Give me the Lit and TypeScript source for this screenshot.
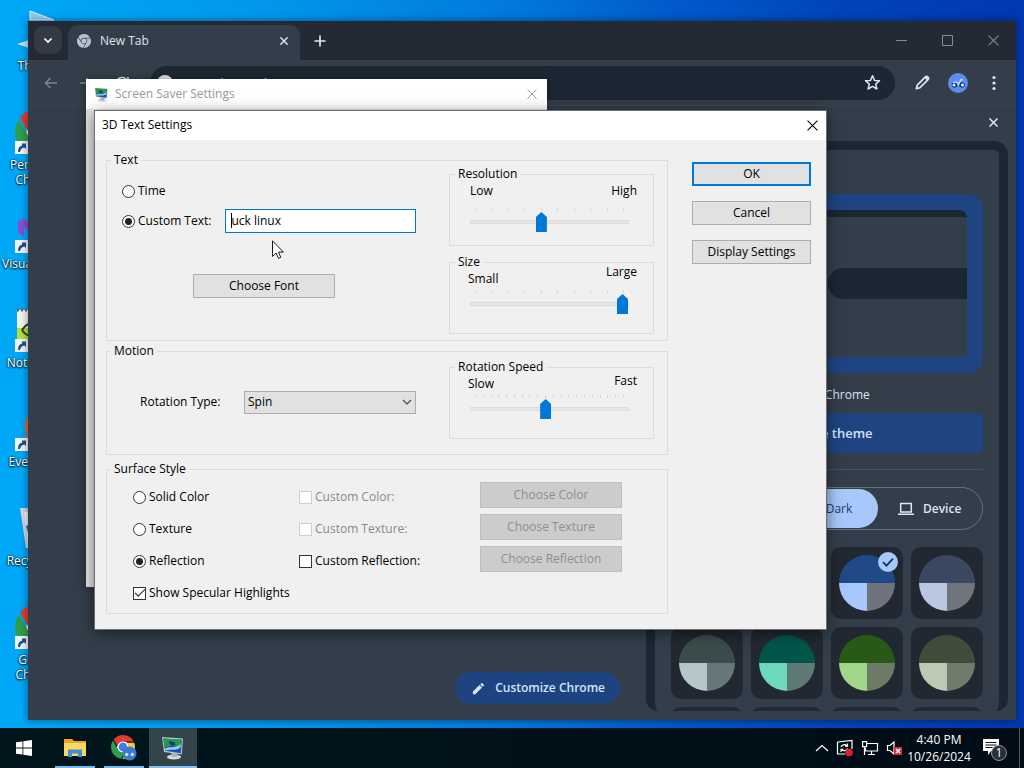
import { LitElement, html, css, svg, nothing } from "lit";
import { customElement, property } from "lit/decorators.js";
import { classMap } from "lit/directives/class-map.js";

const base = css`
  * { box-sizing: border-box; }
  :host { font-family: "Open Sans", "Noto Sans", sans-serif; font-size: 12px; line-height: 16px; }
  button, input, select { font: inherit; margin: 0; }
  svg { display: block; flex: none; }
`;

const chromeParts = [
  "M12 0C8.21 0 4.831 1.757 2.632 4.501l3.953 6.848A5.454 5.454 0 0 1 12 6.545h10.691A12 12 0 0 0 12 0z",
  "M1.931 5.47A11.943 11.943 0 0 0 0 12c0 6.012 4.42 10.991 10.189 11.864l3.953-6.847a5.45 5.45 0 0 1-6.865-2.29z",
  "M15.273 7.636a5.446 5.446 0 0 1 1.45 7.09l-5.344 9.258c.206.01.413.016.621.016 6.627 0 12-5.373 12-12 0-1.54-.29-3.011-.818-4.364z",
];

const chromeLogo = (size: number, mono = "") => html`
  <svg width=${size} height=${size} viewBox="0 0 24 24" aria-hidden="true">
    ${mono ? nothing : svg`<circle cx="12" cy="12" r="6" fill="#fff"/>`}
    <path d=${chromeParts[0]} fill=${mono || "#e33b2e"} />
    <path d=${chromeParts[1]} fill=${mono || "#2f9e4c"} />
    <path d=${chromeParts[2]} fill=${mono || "#f8c93a"} />
    <circle cx="12" cy="12" r="4.4" fill=${mono || "#3f7de8"} />
  </svg>`;

const monitorIcon = (size: number) => html`
  <svg width=${size} height=${size} viewBox="0 0 24 24" aria-hidden="true">
    <ellipse cx="13" cy="21" rx="7" ry="2.6" fill="#d5dade"/>
    <path d="M10 16l7 1-1 4h-5z" fill="#aab3bb"/>
    <path d="M1 1l21 1.5-1.200 16L3 16z" fill="#b4c6d2"/>
    <path d="M2.400 2.400l18.400 1.300-1 13.600L4.200 14.800z" fill="#1c4fb0"/>
    <path d="M2.400 2.400l18.400 1.300-.3 4.500c-5 5-10-1-17.200 3.600z" fill="#249a44"/>
    <path d="M4 12.500c5-3 9 1 15.800-4.500l-.3 3.500c-5 4-10 1-15.300 3.200z" fill="#8fccf0"/>
    <path d="M8 5.500c3-1 6 .5 6.500 3-2 1.800-6 1.800-6.500-3z" fill="#153b80"/>
  </svg>`;

const pencil = (size: number, filled = false) => html`
  <svg width=${size} height=${size} viewBox="0 0 16 16" aria-hidden="true">
    ${filled
      ? svg`<path d="M2 11.300V14h2.700l7-7L9 4.300zM13.700 5a.8.8 0 0 0 0-1.100l-1.600-1.600a.8.8 0 0 0-1.100 0L9.800 3.500l2.700 2.700z" fill="currentColor"/>`
      : svg`<path d="M2.200 13.800l.9-3.400 7.600-7.600c.7-.7 1.500-.7 2.100-.1l.5.5c.6.6.6 1.400-.1 2.100l-7.600 7.600z" fill="none" stroke="currentColor" stroke-width="1.600" stroke-linejoin="round"/><path d="M9.600 3.400l1.700-1.200 2.500 2.500-1.200 1.700z" fill="currentColor"/>`}
  </svg>`;

const cross = (size: number, width = 1.5) => html`
  <svg width=${size} height=${size} viewBox="0 0 10 10" aria-hidden="true">
    <path d="M.5.5l9 9M9.500.5l-9 9" stroke="currentColor" stroke-width=${width} fill="none"/>
  </svg>`;

@customElement("slider-group")
class SliderGroup extends LitElement {
  @property() name = "";
  @property() low = "";
  @property() high = "";
  @property({ type: Number }) max = 9;
  @property({ type: Number }) value = 0;
  @property() variant = "even";

  static styles = [base, css`
    :host { display: block; }
    fieldset { border: 1px solid #dcdcdc; margin: 0; padding: 0 24px 13px 20px; min-width: 0; }
    legend { line-height: 12px; padding: 0 3px; margin-left: -15px; }
    .ends { display: flex; justify-content: space-between; line-height: 12px; margin: -2px -8px 0 0; padding-top: 7px; height: 19px; }
    .fast .ends, .large .ends { margin-left: -2px; margin-right: -8px; }
    .fast .ends { padding-top: 4px; }
    .fast .low { padding-top: 3px; }
    .large .ends { padding-top: 0; }
    .large .low { padding-top: 7px; }
    .ticks { display: flex; justify-content: space-between; height: 4px; padding: 0 5px; margin-top: 5px; }
    .even .ticks { margin-top: 11px; }
    fieldset.large, fieldset.fast { padding-bottom: 19px; }
    .ticks i { width: 1px; height: 3px; background: #d6d6d6; }
    input { appearance: none; display: block; width: 100%; height: 20px; background: none; outline: none; }
    input::-webkit-slider-runnable-track { height: 4px; background: #e6e6e6; border: 1px solid #dcdcdc; }
    input::-webkit-slider-thumb {
      appearance: none; width: 11px; height: 20px; margin-top: -9px; background: #0078d7;
      clip-path: polygon(50% 0, 100% 25%, 100% 100%, 0 100%, 0 25%);
    }
  `];

  render() {
    return html`
      <fieldset class=${this.variant}>
        <legend>${this.name}</legend>
        <div class="ends"><span class="low">${this.low}</span><span>${this.high}</span></div>
        <div class="ticks">${Array.from({ length: this.max + 1 }, () => html`<i></i>`)}</div>
        <input type="range" aria-label=${this.name} min="0" max=${this.max} .value=${String(this.value)} />
      </fieldset>`;
  }
}

@customElement("text-settings-dialog")
class TextSettingsDialog extends LitElement {
  static styles = [base, css`
    :host { display: block; background: #f0f0f0; color: #000; border: 1px solid #6b6f75; box-shadow: 0 3px 14px rgba(0, 0, 0, .5); }
    header { display: flex; align-items: center; justify-content: space-between; height: 29px; padding: 0 8px 1px 7px; background: #fff; }
    header button { border: 0; background: none; padding: 0; color: #000; }
    .body { display: grid; grid-template-columns: 1fr 119px; gap: 24px; padding: 14px 15px 15px 11px; }
    .groups { display: flex; flex-direction: column; gap: 4px; }
    .group { border: 1px solid #dcdcdc; margin: 0; padding: 0 13px 0 15px; min-width: 0; }
    .group > legend { line-height: 12px; padding: 0 3px; margin-left: -11px; }
    .cols { display: grid; grid-template-columns: 1fr 205px; gap: 33px; }
    .sliders { display: flex; flex-direction: column; gap: 10px; padding: 2px 0 6px; }
    .motion .cols { padding: 4px 0 15px; }
    .left { display: flex; flex-direction: column; }
    .line { display: flex; align-items: center; height: 30px; }
    .left .line:first-child { margin-top: 10px; }
    label { display: flex; align-items: center; gap: 3px; white-space: nowrap; }
    .field { position: relative; flex: 1; margin-left: 14px; }
    .field input { display: block; width: 100%; height: 24px; border: 1px solid #0078d7; background: #fff; padding: 0 5px 2px; outline: none; color: #000; }
    .caret { position: absolute; left: 6px; top: 4px; width: 1px; height: 15px; background: #000; }
    .btn { height: 24px; border: 1px solid #adadad; background: #e1e1e1; padding: 0; color: #000; }
    .btn.default { border: 2px solid #0078d7; }
    .btn:disabled { height: 26px; background: #ccc; border-color: #bfbfbf; color: #8e8e8e; }
    .font { width: 142px; margin: 38px 0 0 71px; }
    .motion .left { flex-direction: row; align-items: center; justify-content: space-between; padding: 4px 0 0 18px; }
    .pick { position: relative; width: 172px; }
    .pick select { appearance: none; display: block; width: 100%; height: 23px; border: 1px solid #adadad; background: #e1e1e1; padding: 0 3px; border-radius: 0; color: #000; }
    .pick svg { position: absolute; right: 4px; top: 8px; }
    .surface { margin-top: 4px; }
    .surface .grid { display: grid; grid-template-columns: 166px 181px 142px; grid-auto-rows: 32px; padding: 6px 0 4px 11px; align-items: center; }
    .surface .btn { align-self: start; margin-top: 1px; }
    .wide { grid-column: 1 / -1; }
    input[type="radio"], input[type="checkbox"] { appearance: none; width: 13px; height: 13px; border: 1px solid #333; background: #fff; display: grid; place-content: center; flex: none; }
    input[type="radio"] { border-radius: 50%; }
    input[type="radio"]:checked::before { content: ""; width: 7px; height: 7px; border-radius: 50%; background: #222; }
    input[type="checkbox"]:checked::before { content: ""; width: 9px; height: 4px; border: solid #222; border-width: 0 0 1px 1px; transform: rotate(-45deg); margin-bottom: 3px; }
    input[type="checkbox"]:disabled { border-color: #ccc; }
    .off { color: #8a8a8a; }
    .actions { display: flex; flex-direction: column; gap: 15px; padding-top: 8px; }
  `];

  private radio(name: string, text: string, checked = false) {
    return html`<label><input type="radio" name=${name} .checked=${checked} />${text}</label>`;
  }

  private check(text: string, checked = false, disabled = false) {
    return html`<label class=${classMap({ off: disabled })}><input type="checkbox" .checked=${checked} ?disabled=${disabled} />${text}</label>`;
  }

  render() {
    return html`
      <header><span>3D Text Settings</span><button aria-label="Close">${cross(11, 1)}</button></header>
      <div class="body">
        <div class="groups">
          <fieldset class="group">
            <legend>Text</legend>
            <div class="cols">
              <div class="left">
                <div class="line">${this.radio("source", "Time")}</div>
                <div class="line">
                  ${this.radio("source", "Custom Text:", true)}
                  <div class="field"><input type="text" aria-label="Custom Text" .value=${"uck linux"} /><i class="caret"></i></div>
                </div>
                <button class="btn font">Choose Font</button>
              </div>
              <div class="sliders">
                <slider-group name="Resolution" low="Low" high="High" max="9" value="4" variant="even"></slider-group>
                <slider-group name="Size" low="Small" high="Large" max="9" value="9" variant="large"></slider-group>
              </div>
            </div>
          </fieldset>
          <fieldset class="group motion">
            <legend>Motion</legend>
            <div class="cols">
              <div class="left">
                <label for="rotation">Rotation Type:</label>
                <div class="pick">
                  <select id="rotation"><option>Spin</option></select>
                  <svg width="10" height="7" viewBox="0 0 10 7" aria-hidden="true"><path d="M1 1l4 4 4-4" fill="none" stroke="#444" stroke-width="1.100"/></svg>
                </div>
              </div>
              <slider-group name="Rotation Speed" low="Slow" high="Fast" max="19" value="9" variant="fast"></slider-group>
            </div>
          </fieldset>
          <fieldset class="group surface">
            <legend>Surface Style</legend>
            <div class="grid">
              ${this.radio("surface", "Solid Color")}
              ${this.check("Custom Color:", false, true)}
              <button class="btn" disabled>Choose Color</button>
              ${this.radio("surface", "Texture")}
              ${this.check("Custom Texture:", false, true)}
              <button class="btn" disabled>Choose Texture</button>
              ${this.radio("surface", "Reflection", true)}
              ${this.check("Custom Reflection:")}
              <button class="btn" disabled>Choose Reflection</button>
              <div class="wide">${this.check("Show Specular Highlights", true)}</div>
            </div>
          </fieldset>
        </div>
        <div class="actions">
          <button class="btn default">OK</button>
          <button class="btn">Cancel</button>
          <button class="btn">Display Settings</button>
        </div>
      </div>`;
  }
}

@customElement("browser-window")
class BrowserWindow extends LitElement {
  static styles = [base, css`
    :host { display: flex; flex-direction: column; background: #333e4a; color: #dfe5ee; box-shadow: 0 0 8px rgba(0, 0, 0, .45); overflow: hidden; }
    button { border: 0; background: none; padding: 0; color: inherit; display: grid; place-content: center; }
    .tabs { display: flex; background: #232a35; height: 39px; padding-left: 6px; flex: none; }
    .list { width: 28px; height: 28px; margin-top: 5px; border-radius: 9px; background: #343a43; }
    .tab { display: flex; align-items: center; gap: 9px; width: 232px; margin: 4px 0 0 6px; padding: 0 12px 4px 9px; background: #333e4a; border-radius: 10px 10px 0 0; }
    .tab span { flex: 1; }
    .plus { width: 40px; }
    .controls { display: flex; margin-left: auto; color: #858b93; }
    .controls button { width: 46px; }
    .toolbar { display: flex; align-items: center; height: 46px; padding: 0 4px; flex: none; border-bottom: 1px solid #394550; }
    .toolbar > button { width: 36px; height: 36px; }
    .dim { color: #7b8590; }
    .omni { flex: 1; display: flex; align-items: center; gap: 14px; height: 34px; border-radius: 17px; background: #1d2733; margin: 0 9px 0 10px; padding: 0 14px 0 7px; }
    .omni input { flex: 1; min-width: 0; border: 0; background: none; padding: 0; color: inherit; font-size: 13px; }
    .omni input::placeholder { color: #dfe5ee; }
    .badge { width: 16px; height: 16px; border-radius: 50%; background: #dfe5ee; }
    .page { flex: 1; display: flex; min-height: 0; }
    .ntp { flex: 1; display: flex; align-items: flex-end; justify-content: flex-end; padding: 0 26px 16px 0; }
    .custom { display: flex; align-items: center; gap: 9px; height: 32px; padding: 0 15px 0 16px; border-radius: 16px; background: #1d4480; color: #d3e3fd; font-weight: 600; }
    .side { width: 370px; display: flex; flex-direction: column; padding: 0 8px 9px 0; }
    .side > button { height: 35px; width: 30px; padding-bottom: 3px; align-self: flex-end; }
    .panel { position: relative; flex: 1; min-height: 0; overflow: hidden; border: 9px solid #1c2733; border-bottom: 0; border-radius: 14px 14px 12px 12px; display: flex; }
    .inner { flex: 1; overflow: hidden; background: #333e4a; border-radius: 10px; padding: 44px 16px 0; }
    .thumb { position: absolute; right: -7px; top: 1px; width: 6px; height: 303px; border-radius: 3px; background: #68737f; }
    .preview { background: #1e4581; border-radius: 14px; height: 179px; padding: 16px; }
    .mini { height: 100%; background: #333e4a; border-top: 7px solid #1c2733; border-radius: 8px 8px 4px 0; padding-top: 51px; display: flex; justify-content: flex-end; }
    .mini i { width: 139px; height: 31px; background: #1c2733; border-radius: 15px 0 0 15px; }
    .name { text-align: center; margin: 14px 0 10px; }
    .change { width: 100%; height: 40px; background: #1e4581; border-radius: 6px; color: #d3e3fd; font-size: 13px; font-weight: 600; }
    hr { border: 0; border-top: 1px solid #46525f; margin: 16px 0 17px; }
    .modes { display: grid; grid-template-columns: 1fr 1fr 1fr; height: 43px; border: 1px solid #66727f; border-radius: 22px; padding: 1px; }
    .modes button { display: flex; align-items: center; justify-content: center; gap: 9px; border-radius: 20px; font-weight: 600; }
    .modes .on { background: #a8c7fa; color: #1c3b68; font-weight: 400; }
    .swatches { display: grid; grid-template-columns: repeat(4, 72px); grid-auto-rows: 72px; gap: 8px; margin-top: 17px; }
    .swatch { position: relative; background: #222831; border-radius: 10px; }
    .swatch .tick { position: absolute; right: 5px; top: 5px; }
  `];

  private swatches: Array<[string, string, string]> = [
    ["#3c4043", "#c7c7c7", "#7c7c7c"], ["#3c4043", "#c7c7c7", "#7c7c7c"], ["#1f4a87", "#a8c7fa", "#70737c"], ["#3c4861", "#bac7e0", "#70757c"],
    ["#3a4c4c", "#b5c7ca", "#68777a"], ["#00564a", "#6fd9c0", "#5d7a75"], ["#265a16", "#a1d78a", "#6c7c66"], ["#424c3a", "#bccab4", "#727a6c"],
    ["#555", "#ccc", "#777"], ["#555", "#ccc", "#777"], ["#555", "#ccc", "#777"], ["#555", "#ccc", "#777"],
  ];

  render() {
    return html`
      <div class="tabs">
        <button class="list" aria-label="Search tabs"><svg width="10" height="7" viewBox="0 0 10 7"><path d="M1.500 1.500L5 5l3.500-3.500" fill="none" stroke="#fff" stroke-width="1.700"/></svg></button>
        <div class="tab">${chromeLogo(14, "#b9c3d0")}<span>New Tab</span><button aria-label="Close tab">${cross(8, 1.8)}</button></div>
        <button class="plus" aria-label="New tab"><svg width="12" height="12" viewBox="0 0 12 12"><path d="M6 .5v11M.5 6h11" stroke="currentColor" stroke-width="1.700"/></svg></button>
        <div class="controls">
          <button aria-label="Minimize"><svg width="11" height="11" viewBox="0 0 11 11"><path d="M0 5.500h11" stroke="currentColor"/></svg></button>
          <button aria-label="Maximize"><svg width="11" height="11" viewBox="0 0 11 11"><path d="M.5.5h10v10H.5z" fill="none" stroke="currentColor"/></svg></button>
          <button aria-label="Close">${cross(11, 1)}</button>
        </div>
      </div>
      <div class="toolbar">
        <button class="dim" aria-label="Back"><svg width="13" height="12" viewBox="0 0 13 12"><path d="M13 6H1.500M6.500 1l-5 5 5 5" fill="none" stroke="currentColor" stroke-width="1.500"/></svg></button>
        <button class="dim" aria-label="Forward"><svg width="13" height="12" viewBox="0 0 13 12"><path d="M0 6h11.500M6.500 1l5 5-5 5" fill="none" stroke="currentColor" stroke-width="1.500"/></svg></button>
        <button aria-label="Reload"><svg width="14" height="14" viewBox="0 0 14 14"><path d="M12.500 5A6 6 0 1 0 13 7.500M13 1v4.500H8.500" fill="none" stroke="currentColor" stroke-width="1.500"/></svg></button>
        <div class="omni">
          <i class="badge"></i><input type="text" aria-label="Address" placeholder="Search Google or type a URL" />
          <svg width="17" height="17" viewBox="0 0 17 17"><path d="M8.500 1.800l2 4.600 5 .4-3.800 3.300 1.200 4.900-4.400-2.600L4.100 15l1.200-4.900L1.500 6.800l5-.4z" fill="none" stroke="currentColor" stroke-width="1.500" stroke-linejoin="round"/></svg>
        </div>
        <button aria-label="Edit">${pencil(17)}</button>
        <button aria-label="Profile"><svg width="20" height="20" viewBox="0 0 20 20"><circle cx="10" cy="10" r="10" fill="#5b8def"/><circle cx="6.500" cy="12" r="2.800" fill="#1d3f7c"/><circle cx="14" cy="12" r="2.800" fill="#1d3f7c"/><circle cx="6" cy="12" r="1.500" fill="#e8f0ff"/><circle cx="14.500" cy="12" r="1.500" fill="#e8f0ff"/><path d="M5 9.500l4-.5 1.500 2.500L13 6.500l2 .5" fill="none" stroke="#dbe7ff" stroke-width="1.100"/></svg></button>
        <button aria-label="Menu"><svg width="4" height="16" viewBox="0 0 4 16"><g fill="currentColor"><circle cx="2" cy="2.500" r="1.600"/><circle cx="2" cy="8" r="1.600"/><circle cx="2" cy="13.500" r="1.600"/></g></svg></button>
      </div>
      <div class="page">
        <div class="ntp"><button class="custom">${pencil(15, true)}Customize Chrome</button></div>
        <div class="side">
          <button aria-label="Close side panel">${cross(9, 1.7)}</button>
          <div class="panel">
            <div class="inner">
              <div class="preview"><div class="mini"><i></i></div></div>
              <div class="name">Classic Chrome</div>
              <button class="change">Change theme</button>
              <hr />
              <div class="modes">
                <button>Light</button>
                <button class="on"><svg width="15" height="15" viewBox="0 0 15 15"><path d="M8 2a5.500 5.500 0 1 0 5.500 7A5 5 0 0 1 8 2z" fill="none" stroke="currentColor" stroke-width="1.500"/></svg>Dark</button>
                <button><svg width="16" height="14" viewBox="0 0 16 14"><path d="M2.700 1.500h10.600v8.500H2.700zM0 12.200h16" fill="none" stroke="currentColor" stroke-width="1.500"/></svg>Device</button>
              </div>
              <div class="swatches">
                ${this.swatches.map(([top, left, right], i) => html`
                  <div class="swatch">
                    <svg width="72" height="72" viewBox="0 0 72 72"><path d="M8 36a28 28 0 0 1 56 0z" fill=${top}/><path d="M8 36a28 28 0 0 0 28 28V36z" fill=${left}/><path d="M64 36a28 28 0 0 1-28 28V36z" fill=${right}/></svg>
                    ${i === 2 ? html`<svg class="tick" width="20" height="20" viewBox="0 0 20 20"><circle cx="10" cy="10" r="10" fill="#a8c7fa"/><path d="M5 10.200l3.500 3.500 6.500-7" fill="none" stroke="#12305c" stroke-width="1.700"/></svg>` : nothing}
                  </div>`)}
              </div>
            </div>
            <i class="thumb"></i>
          </div>
        </div>
      </div>`;
  }
}

@customElement("app-root")
class AppRoot extends LitElement {
  static styles = [base, css`
    :host { display: flex; flex-direction: column; height: 100vh; overflow: hidden; }
    .desk { position: relative; flex: 1; min-height: 0; overflow: hidden; background: linear-gradient(90deg, #00a8f8 0, #0098ec 25%, #007cde 48%, #005acb 66%, #0044bc 82%, #0038b2 100%); }
    .icons { display: flex; flex-direction: column; width: 76px; padding-top: 9px; color: #fff; text-shadow: 0 1px 2px #000, 0 0 2px #000; }
    .item { display: flex; flex-direction: column; align-items: center; height: 99px; line-height: 15px; text-align: center; white-space: pre-line; }
    .pic { position: relative; width: 48px; height: 48px; display: grid; place-content: center; margin-bottom: 1px; }
    .arrow { position: absolute; left: 1px; bottom: 2px; }
    browser-window { position: absolute; inset: 21px 8px 8px 28px; }
    .saver { position: absolute; left: 86px; top: 79px; width: 461px; height: 508px; background: #e4e4e4; box-shadow: 0 0 8px rgba(0, 0, 0, .35); }
    .saver header { display: flex; align-items: center; gap: 6px; height: 30px; padding: 0 10px 0 8px; background: #fff; color: #999; }
    .saver button { margin-left: auto; border: 0; padding: 0; background: none; color: #999; }
    text-settings-dialog { position: absolute; left: 94px; top: 110px; width: 733px; }
    .cursor { position: absolute; left: 272px; top: 240px; }
    .bar { display: flex; align-items: stretch; height: 40px; background: linear-gradient(90deg, #00161c, #000c16); color: #fff; flex: none; }
    .bar button { border: 0; background: none; padding: 0; color: inherit; display: grid; place-content: center; }
    .apps { display: flex; gap: 1px; }
    .app { width: 48px; }
    .apps .start { margin-right: 2px; }
    .bar .run { background: linear-gradient(#76b9ed, #76b9ed) center bottom / 40px 2px no-repeat; }
    .bar .active { background: linear-gradient(#86c0ee, #86c0ee) center bottom / 100% 2px no-repeat #34444b; }
    .tray { display: flex; align-items: center; gap: 7px; margin-left: auto; }
    .tray time { text-align: center; line-height: 17px; width: 64px; margin-left: -4px; }
    .tray .note { align-self: stretch; width: 50px; margin-left: -9px; }
    .tray .peek { align-self: stretch; width: 5px; border-left: 1px solid #4a555c; margin-left: -7px; }
  `];

  private shortcut(art: unknown, text: string, arrow = true) {
    return html`<div class="item"><div class="pic">${art}${arrow ? html`
      <svg class="arrow" width="13" height="13" viewBox="0 0 13 13"><path d="M0 0h13v13H0z" fill="#f2f5f8"/><path d="M3 11c0-4 1.500-6 4-6.200V2.500h4V8L9.300 6.600C7 7 5.500 8.500 5 11z" fill="#1f4f96"/></svg>` : nothing}</div>${text}</div>`;
  }

  render() {
    const thisPc = html`<svg width="48" height="48" viewBox="0 0 48 48"><path d="M16 2l24 9H16z" fill="#8ecdf5" stroke="#dff1fc"/><path d="M3 35l12-4v8z" fill="#c5e2f4"/></svg>`;
    const studio = html`<svg width="48" height="48" viewBox="0 0 48 48"><path d="M4 14l6-3 22 18V8l10 4v26l-10 4L10 20v9l-6-3z" fill="#8452cf"/></svg>`;
    const notepad = html`<svg width="48" height="48" viewBox="0 0 48 48"><path d="M3 4h36v40H3z" fill="#f3f6ee"/><path d="M3 22h36v22H3z" fill="#b5df3c"/><path d="M3 4h36" stroke="#5c6a70" stroke-width="3" stroke-dasharray="2 2"/><path d="M8 24c4-6 9-8 14-6M8 24c3 5 8 7 13 5" stroke="#2a3b16" stroke-width="2" fill="none"/></svg>`;
    const everything = html`<svg width="48" height="48" viewBox="0 0 48 48"><circle cx="29" cy="21" r="15" fill="none" stroke="#e8672b" stroke-width="6"/><path d="M18 30L5 43" stroke="#e8672b" stroke-width="7"/></svg>`;
    const bin = html`<svg width="48" height="48" viewBox="0 0 48 48"><path d="M6 4h36l-6 40H12z" fill="#ccd9e6"/><path d="M10 8h7l3 32h-6z" fill="#eef3f8"/><path d="M12 22l8-4 1 10-7 1z" fill="#2d6fc4"/></svg>`;
    return html`
      <main class="desk">
        <div class="icons">
          ${this.shortcut(thisPc, "This PC", false)}
          ${this.shortcut(chromeLogo(46), "Person 1 -\nChrome")}
          ${this.shortcut(studio, "Visual Studio")}
          ${this.shortcut(notepad, "Notepad++")}
          ${this.shortcut(everything, "Everything")}
          ${this.shortcut(bin, "Recycle Bin", false)}
          ${this.shortcut(chromeLogo(46), "Google\nChrome")}
        </div>
        <browser-window></browser-window>
        <section class="saver">
          <header>${monitorIcon(15)}<span>Screen Saver Settings</span><button aria-label="Close">${cross(10, 1)}</button></header>
        </section>
        <text-settings-dialog></text-settings-dialog>
        <svg class="cursor" width="12" height="19" viewBox="0 0 12 19"><path d="M.5.8v15.700l3.600-3.500 2.400 5.400 2.300-1-2.300-5.300h4.900z" fill="#fff" stroke="#000" stroke-width=".9"/></svg>
      </main>
      <nav class="bar">
        <div class="apps">
          <button class="app start" aria-label="Start"><svg width="16" height="16" viewBox="0 0 16 16"><path d="M0 2.300L6.500 1.400v6.200H0zM7.300 1.300L16 0v7.600H7.300zM0 8.400h6.500v6.200L0 13.700zM7.300 8.400H16V16l-8.700-1.300z" fill="#fff"/></svg></button>
          <button class="app run" aria-label="File Explorer"><svg width="22" height="18" viewBox="0 0 22 18"><path d="M0 0h8l2 2h12v15H0z" fill="#e2ab2b"/><path d="M0 4h22v13H0z" fill="#fbd75f"/><path d="M4 18v-7.500h14V18h-4v-3.500H8V18z" fill="#3f8fd6"/></svg></button>
          <button class="app run" aria-label="Chrome"><svg width="26" height="26" viewBox="0 0 26 26">
            <circle cx="12" cy="12" r="6" fill="#fff"/><path d=${chromeParts[0]} fill="#e33b2e"/><path d=${chromeParts[1]} fill="#2f9e4c"/><path d=${chromeParts[2]} fill="#f8c93a"/><circle cx="12" cy="12" r="4.400" fill="#3f7de8"/>
            <circle cx="18.500" cy="18.500" r="7" fill="#3c79cf"/><circle cx="15.700" cy="19.500" r="1.700" fill="#cfe0fa"/><circle cx="21.300" cy="19.500" r="1.700" fill="#cfe0fa"/></svg></button>
          <button class="app active" aria-label="Screen Saver">${monitorIcon(24)}</button>
        </div>
        <div class="tray">
          <svg width="14" height="8" viewBox="0 0 14 8"><path d="M1 7l6-5.500L13 7" fill="none" stroke="#fff" stroke-width="1.200"/></svg>
          <svg width="18" height="18" viewBox="0 0 18 18"><path d="M1.500 3L16 1.500V10M1.500 3v12H9" fill="none" stroke="#fff" stroke-width="1.200"/><path d="M5 8c1-2.500 4-3 6-1.200M11.500 4.500v2.600H9M11.500 9.500c-1 2.500-4 2.800-6 1M5 13v-2.600h2.500" fill="none" stroke="#fff" stroke-width="1.200"/><circle cx="13" cy="13.500" r="3.800" fill="#e0202c"/></svg>
          <svg width="18" height="16" viewBox="0 0 18 16"><path d="M6 3.500h10.500V11H4.500V8M10.500 11v3.500M7 14.500h7" fill="none" stroke="#fff" stroke-width="1.200"/><path d="M1.600 1.600h4v5h-4zM3.500 6.600V15" fill="none" stroke="#fff" stroke-width="1.200"/></svg>
          <svg width="18" height="16" viewBox="0 0 18 16"><path d="M1.500 5.500H4L8 2v12L4 10.500H1.500z" fill="none" stroke="#fff" stroke-width="1.200"/><path d="M8 7h8v8H8z" fill="#dd2c36"/><path d="M10 9l4 4m0-4l-4 4" stroke="#fff" stroke-width="1.500"/></svg>
          <time>4:40 PM<br />10/26/2024</time>
          <button class="note" aria-label="Notifications"><svg width="26" height="26" viewBox="0 0 26 26"><path d="M2 4h16v12h-8l-3 4v-4H2z" fill="#fff"/><path d="M4.500 7.500h11M4.500 10h11M4.500 12.500h7" stroke="#0a141c"/><circle cx="18" cy="18" r="7.500" fill="#26303a" stroke="#8a9298"/><text x="18" y="22" font-size="12" text-anchor="middle" fill="#fff">1</text></svg></button>
          <i class="peek"></i>
        </div>
      </nav>`;
  }
}
